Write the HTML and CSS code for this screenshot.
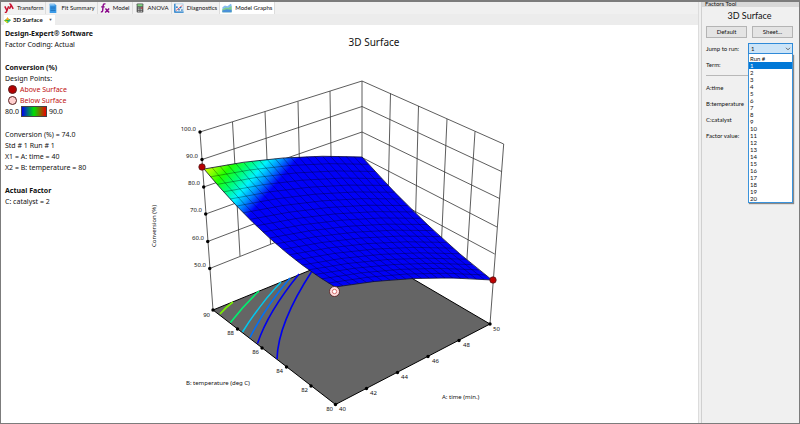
FILE: index.html
```html
<!DOCTYPE html>
<html lang="en">
<head>
<meta charset="utf-8">
<title>3D Surface</title>
<link rel="stylesheet" href="styles.css">
</head>
<body>
<main class="workspace">
  <nav class="tabs" aria-label="Analysis steps">
    <button class="tab tab-first"><svg class="icon" viewBox="0 0 12 12"><g fill="none" stroke="#c8102e" stroke-width="1.8"><path d="M1 4l2.4 5M5.6 4L3 10.500Q2.500 11.500 1 11.200"/><path d="M6.500 1.200Q8 .8 8.600 2.500L11 7M8.600 2.800L6.500 7"/></g></svg>Transform</button>
    <button class="tab"><svg class="icon" viewBox="0 0 12 12"><path d="M2 1h6l2 2v9H2z" fill="#3b9be8"/><path d="M2 1h6v2H2z" fill="#8cc6f5"/><path d="M3 5h6M3 7h6M3 9h6" stroke="#1767b0" stroke-width=".8"/></svg>Fit Summary</button>
    <button class="tab"><svg class="icon" viewBox="0 0 12 12"><g fill="none" stroke="#8b0a8b" stroke-width="1.7"><path d="M6.500 1.200Q4 .4 3.700 3.500L3.200 9Q3 11 1 10.500M1.400 4.600h4.200M6.500 6.500l4.500 5M11 6.500l-4.800 5"/></g></svg>Model</button>
    <button class="tab"><svg class="icon" viewBox="0 0 12 12"><rect x="2" y=".5" width="8" height="11" rx="1" fill="#555"/><rect x="3" y="1.500" width="6" height="2.500" fill="#7ed37e"/><path d="M3.500 6h5M3.500 8h5M3.500 10h5" stroke="#ddd" stroke-width="1" stroke-dasharray="1.200 .7"/><path d="M7.500 5h1.500v2H7.500z" fill="#c33"/></svg>ANOVA</button>
    <button class="tab"><svg class="icon" viewBox="0 0 12 12"><path d="M1 1v10h10.500" fill="none" stroke="#1677c8" stroke-width="1.500"/><path d="M1 1h10v10" fill="none" stroke="#7ab8e8" stroke-width=".6"/><path d="M2.500 9L10 3" stroke="#d45" stroke-width="1"/><g fill="#1677c8"><circle cx="3.500" cy="5" r="1"/><circle cx="6" cy="8" r="1"/><circle cx="8" cy="5.500" r="1"/><circle cx="9.500" cy="8.500" r="1"/></g></svg>Diagnostics</button>
    <button class="tab tab-on" aria-current="page"><svg class="icon" viewBox="0 0 12 12"><path d="M.5 5l3-2 3 1 4-3 1 1v9H.5z" fill="#86bdf0"/><path d="M.5 7.500l4-2 3 .5 4-2.500V11H.5z" fill="#7fcf8b"/><path d="M.5 9l5-1.500 6 .5v3H.5z" fill="#4a90d9"/></svg>Model Graphs</button>
  </nav>
  <div class="subtabs">
    <button class="subtab"><svg class="icon-small" viewBox="0 0 8 8"><path d="M0 4l4-2.500 4 2-4 3.500z" fill="#28b428"/><path d="M2 3.500l2-3.500L6 3.500z" fill="#f5a623"/><path d="M0 4l4 .5L4 7z" fill="#f5d723"/><path d="M4 4.500l4-1L5 6z" fill="#28b4dc"/></svg>3D Surface<span class="caret">▼</span></button>
  </div>
  <div class="content">
    <aside class="legend">
      <section>
        <h2>Design-Expert® Software</h2>
        <p>Factor Coding: Actual</p>
      </section>
      <section>
        <h2>Conversion (%)</h2>
        <p>Design Points:</p>
        <p class="point"><i class="dot dot-above"></i>Above Surface</p>
        <p class="point"><i class="dot dot-below"></i>Below Surface</p>
        <p class="scale">80.0<i class="ramp"></i>90.0</p>
      </section>
      <section>
        <p>Conversion (%) = 74.0</p>
        <p>Std # 1 Run # 1</p>
        <p>X1 = A: time = 40</p>
        <p>X2 = B: temperature = 80</p>
      </section>
      <section>
        <h2>Actual Factor</h2>
        <p>C: catalyst = 2</p>
      </section>
    </aside>
    <svg class="chart" viewBox="140 25 558 398" role="img" aria-label="3D surface of conversion">
      <defs>
        <linearGradient id="heat" gradientUnits="userSpaceOnUse" x1="203" y1="168" x2="253" y2="211">
          <stop offset="0" stop-color="#d8ff00"/>
          <stop offset=".12" stop-color="#9cff00"/>
          <stop offset=".3" stop-color="#20ff00"/>
          <stop offset=".48" stop-color="#00ff70"/>
          <stop offset=".67" stop-color="#00f4ff"/>
          <stop offset=".82" stop-color="#0090ff"/>
          <stop offset="1" stop-color="#0000f8"/>
        </linearGradient>
      </defs>
      <text class="chart-title" x="374" y="46">3D Surface</text>
      <path class="floor" d="M213 310L362 249L490 324L335.500 404.500Z"/>
      <g class="contours">
        <path stroke="#78f000" d="M220 314Q226 307 233 302"/>
        <path stroke="#00f070" d="M230.500 322.500Q244 305 259 291"/>
        <path stroke="#00c8f0" d="M242.500 332Q260 304 281 282"/>
        <path stroke="#0070f8" d="M250 337.500Q266 306 290 278"/>
        <path stroke="#0000f0" d="M257.500 343.500Q268 312 299 274"/>
        <path stroke="#0000f0" d="M277 359Q278 323 312 271"/>
      </g>
      <g class="wall">
        <path d="M200 132L362 81L503.700 144M202 159.500L362 106.500L501.500 171.500M203.700 187L362 132L499.500 198.500M205.700 214L362 157.500L497 227M207.700 241.500L362 183L494.700 254M209.700 268.500L362 208L493 281"/>
        <path d="M232.500 122L240 256M265 111.500L270.500 244M298 101.500L301 232M330 91L332 220M362 81V208M390.500 93.500L387.500 223M418.500 106L415 238M447 119L441 252M475 131.500L466.500 266"/>
        <path d="M200 132L213 310M503.700 144L490 324"/>
      </g>
      <path class="surface" d="M204 169Q283 153 362 157Q427 230 492 280Q413.500 273.500 335 287Q269.500 248 204 169Z"/>
      <path class="mesh" id="mesh"/>
      <g class="ticks">
        <circle cx="200" cy="132" r="1.700"/><circle cx="202" cy="159.500" r="1.700"/><circle cx="203.700" cy="187" r="1.700"/><circle cx="205.700" cy="214" r="1.700"/><circle cx="207.700" cy="241.500" r="1.700"/><circle cx="209.700" cy="268.500" r="1.700"/>
        <circle cx="213" cy="310" r="1.700"/><circle cx="237.500" cy="329" r="1.700"/><circle cx="262" cy="348" r="1.700"/><circle cx="286.500" cy="367" r="1.700"/><circle cx="311" cy="386" r="1.700"/><circle cx="335.500" cy="404.500" r="1.700"/>
        <circle cx="366.500" cy="388.500" r="1.700"/><circle cx="397.500" cy="372.500" r="1.700"/><circle cx="428" cy="356.500" r="1.700"/><circle cx="459" cy="340.500" r="1.700"/><circle cx="490" cy="324" r="1.700"/>
      </g>
      <g class="marks">
        <circle cx="202" cy="167" r="3.200" fill="#b80000"/>
        <circle cx="493" cy="280" r="3.200" fill="#c00000"/>
        <circle cx="334.500" cy="291.500" r="5" fill="#ffdcdc"/>
        <circle class="ring" cx="334.500" cy="291.500" r="2.200"/>
      </g>
      <g class="labels labels-end">
        <text x="196" y="131">100.0</text><text x="198" y="158">90.0</text><text x="200" y="185">80.0</text><text x="202" y="212">70.0</text><text x="204" y="240">60.0</text><text x="206" y="267">50.0</text>
        <text x="210" y="317">90</text><text x="234" y="335">88</text><text x="259" y="354">86</text><text x="283" y="373">84</text><text x="308" y="392">82</text><text x="333" y="411">80</text>
      </g>
      <g class="labels">
        <text x="339" y="411">40</text><text x="370" y="395">42</text><text x="401" y="379">44</text><text x="432" y="363">46</text><text x="463" y="347">48</text><text x="493" y="331">50</text>
        <text x="186" y="385">B: temperature (deg C)</text>
        <text x="442" y="399">A: time (min.)</text>
        <text transform="translate(156 247) rotate(-90)">Conversion (%)</text>
      </g>
    </svg>
  </div>
</main>
<aside class="panel">
  <header class="panel-bar">Factors Tool</header>
  <div class="panel-body">
    <h1>3D Surface</h1>
    <div class="buttons"><button>Default</button><button>Sheet...</button></div>
    <div class="field">
      <label for="run">Jump to run:</label>
      <div class="combo">
        <select id="run"><option>1</option></select>
        <svg class="chevron" viewBox="0 0 6 4"><path d="M1 .8l2 2 2-2"/></svg>
        <ul class="options" role="listbox" aria-label="Jump to run">
          <li>Run #</li><li class="picked">1</li><li>2</li><li>3</li><li>4</li><li>5</li><li>6</li><li>7</li><li>8</li><li>9</li><li>10</li><li>11</li><li>12</li><li>13</li><li>14</li><li>15</li><li>16</li><li>17</li><li>18</li><li>19</li><li>20</li>
        </ul>
      </div>
    </div>
    <div class="field">Term:</div>
    <hr>
    <div class="field">A:time</div>
    <div class="field">B:temperature</div>
    <div class="field">C:catalyst</div>
    <div class="field">Factor value:</div>
  </div>
</aside>
<script src="mesh.js"></script>
</body>
</html>
```
FILE: styles.css
```css
* { box-sizing: border-box; }
body {
  margin: 0;
  min-height: 100vh;
  display: flex;
  border: 1px solid #7c7c7c;
  border-top-width: 2px;
  background: #f0f0f0;
  color: #111;
  font: 7px/11px "Noto Sans", "Open Sans", sans-serif;
}
h1, h2, p, ul { margin: 0; padding: 0; }
button, select { font: inherit; color: inherit; margin: 0; }
.workspace {
  flex: 1;
  min-width: 0;
  display: flex;
  flex-direction: column;
  border-right: 1px solid #dcdcdc;
}
.tabs { display: flex; height: 12px; }
.tab {
  display: flex;
  align-items: center;
  gap: 3px;
  padding: 0 2px;
  border: 0;
  border-right: 1px solid #dcdcdc;
  background: #f2f2f2;
  font: 6px/10px Lato, "Noto Sans", sans-serif;
  white-space: nowrap;
}
.tab-first { padding-left: 3px; }
.tab-on { background: #fff; }
.icon { width: 10px; height: 10px; }
.subtabs { height: 11px; padding: 1px 3px 0; background: #ececec; }
.subtab {
  display: flex;
  align-items: center;
  gap: 2px;
  height: 10px;
  padding: 0 2px 0 0;
  border: 0;
  background: #fff;
  font: 700 6px/10px Lato, "Noto Sans", sans-serif;
}
.icon-small { width: 7px; height: 7px; }
.caret { margin-left: 4px; font-size: 4px; color: #555; }
.content { flex: 1; display: flex; background: #fff; }
.legend { width: 139px; flex: none; padding: 3px 0 0 4px; white-space: nowrap; }
.legend section { margin-bottom: 12px; }
.legend h2 { font-size: 7px; line-height: 11px; font-weight: 700; }
.point { display: flex; align-items: center; gap: 3px; padding-left: 3px; color: #c01010; }
.dot { width: 9px; height: 9px; border: 1px solid #5a2020; border-radius: 50%; }
.dot-above { background: #b40000; }
.dot-below { background: #ffd0d0; }
.scale { display: flex; align-items: center; gap: 2px; }
.ramp {
  width: 26px;
  height: 11px;
  border: 1px solid #444;
  background: linear-gradient(90deg, #0000f0, #00e000 50%, #f00000);
}
.chart { flex: 1; min-width: 0; align-self: flex-start; }
.chart text { fill: #111; }
.chart .chart-title { font-size: 10px; text-anchor: middle; }
.labels { font-size: 6px; }
.labels-end { text-anchor: end; }
.floor { fill: #656565; stroke: #000; stroke-width: 1; }
.contours { fill: none; stroke-width: 1.6; }
.wall { fill: none; stroke: #333; stroke-width: .8; }
.surface { fill: url(#heat); stroke: #101030; stroke-width: .8; }
.mesh { fill: none; stroke: #000; stroke-opacity: .65; stroke-width: .5; }
.marks { stroke: #501818; stroke-width: .8; }
.marks .ring { fill: #fff; stroke: #d06060; stroke-width: .9; }
.panel {
  width: 98px;
  flex: none;
  margin-left: 2px;
  border-left: 1px solid #d0d0d0;
  font: 6px/11px Lato, "Noto Sans", sans-serif;
}
.panel-bar {
  height: 5px;
  padding-left: 3px;
  background: #d8d8d8;
  line-height: 3px;
}
.panel-body { padding: 3px 6px 0 4px; }
.panel h1 { font-size: 9px; line-height: 12px; font-weight: 400; text-align: center; }
.buttons { display: flex; gap: 5px; margin: 4px 0 5px; }
.buttons button {
  flex: 1;
  height: 12px;
  padding: 0;
  border: 1px solid #b4b4b4;
  background: #e4e4e4;
  line-height: 10px;
}
.field { display: flex; align-items: center; height: 10px; margin-bottom: 6px; white-space: nowrap; }
.field label { width: 42px; flex: none; }
.combo { position: relative; flex: 1; display: flex; }
.combo select {
  appearance: none;
  width: 100%;
  height: 11px;
  padding: 0 2px;
  border: 1px solid #2f8ad8;
  border-radius: 0;
  background: #cce4f7;
  line-height: 9px;
}
.chevron { position: absolute; right: 2px; top: 4px; width: 6px; height: 4px; fill: none; stroke: #444; stroke-width: .8; }
.options {
  position: absolute;
  left: 0;
  right: 0;
  top: 11px;
  padding-top: 1px;
  border: 1px solid #3a93dc;
  border-top: 0;
  background: #fff;
  box-shadow: 1px 1px 1px #888;
  list-style: none;
  line-height: 7px;
}
.options li { height: 7px; padding-left: 1px; }
.options .picked { background: #0078d7; color: #fff; }
hr { margin: 0 0 6px; border: 0; border-top: 1px solid #b8b8b8; }
```
FILE: mesh.js
```js
// Each mesh line is a quadratic curve between opposite edges of the surface.
const corner = { left: [204, 169], back: [362, 157], right: [492, 280], front: [335, 287] };
const steps = 20;

function along(a, b, t, bulge) {
  return [
    a[0] + (b[0] - a[0]) * t,
    a[1] + (b[1] - a[1]) * t + 4 * bulge * t * (1 - t)
  ];
}

function curve(p, q, bulge) {
  const mx = (p[0] + q[0]) / 2;
  const my = (p[1] + q[1]) / 2 + 2 * bulge;
  return `M${p}Q${mx},${my} ${q}`;
}

let d = "";
for (let i = 1; i < steps; i++) {
  const t = i / steps;
  d += curve(along(corner.left, corner.front, t, 10), along(corner.back, corner.right, t, 6), -5);
  const mix = 10 + (6 - 10) * t;
  d += curve(along(corner.left, corner.back, t, -5), along(corner.front, corner.right, t, -5), mix);
}
document.getElementById("mesh").setAttribute("d", d);
```
